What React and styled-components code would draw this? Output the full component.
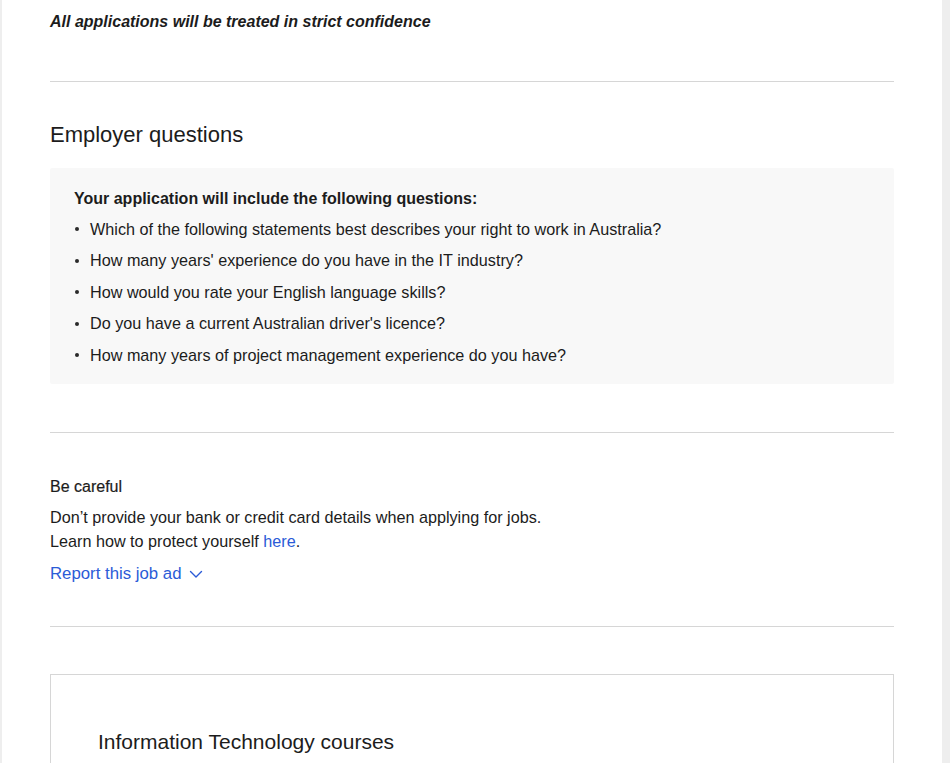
import React from 'react'
import styled, { createGlobalStyle } from 'styled-components'

const GlobalStyle = createGlobalStyle`
    body{
        margin: 0;
        background: #eeeeee;
        font-family: "Liberation Sans", Arial, Helvetica, sans-serif;
        color: #1c1c1c;
    }
`;

const questions = [
    'Which of the following statements best describes your right to work in Australia?',
    "How many years' experience do you have in the IT industry?",
    'How would you rate your English language skills?',
    "Do you have a current Australian driver's licence?",
    'How many years of project management experience do you have?',
]

function ChevronDown() {
    return (
        <svg width="14" height="14" viewBox="0 0 14 14" fill="none">
            <path d="M1.5 4.5 L7 10 L12.5 4.5" stroke="currentColor" strokeWidth="1.4" strokeLinecap="round" strokeLinejoin="round" />
        </svg>
    )
}

function App() {
    return (
        <>
            <GlobalStyle />
            <Panel>
                <Confidence>All applications will be treated in strict confidence</Confidence>
                <Divider $top={49} />

                <Section $pad={42}>
                    <SectionTitle>Employer questions</SectionTitle>
                    <QuestionBox>
                        <QuestionLead>Your application will include the following questions:</QuestionLead>
                        <QuestionList>
                            {questions.map((q) => (
                                <QuestionItem key={q}>{q}</QuestionItem>
                            ))}
                        </QuestionList>
                    </QuestionBox>
                </Section>
                <Divider $top={48} />

                <Section $pad={44}>
                    <CarefulTitle>Be careful</CarefulTitle>
                    <Body>
                        Don’t provide your bank or credit card details when applying for jobs.<br />
                        Learn how to protect yourself <Link href="#">here</Link>.
                    </Body>
                    <ReportButton type="button">
                        Report this job ad <ChevronDown />
                    </ReportButton>
                </Section>
                <Divider $top={40} />

                <CourseCard>
                    <CourseTitle>Information Technology courses</CourseTitle>
                </CourseCard>
            </Panel>
        </>
    )
}

const Panel = styled.div`
    margin-left: 2px;
    width: 940px;
    min-height: 763px;
    background: #fff;
    padding: 12px 48px 40px;
    box-sizing: border-box;
`;

const Confidence = styled.p`
    margin: 0;
    font-size: 16px;
    line-height: 20px;
    font-weight: 700;
    font-style: italic;
    color: #1c1c1c;
`;

const Divider = styled.hr`
    border: none;
    border-top: 1px solid #d6d6d6;
    margin: ${p => p.$top}px 0 0;
`;

const Section = styled.section`
    padding-top: ${p => p.$pad}px;
`;

const SectionTitle = styled.h2`
    margin: 0 0 22px;
    font-size: 22px;
    line-height: 22px;
    font-weight: 400;
    color: #1c1c1c;
`;

const QuestionBox = styled.div`
    background: #f8f8f8;
    border-radius: 2px;
    padding: 20px 24px 18px;
`;

const QuestionLead = styled.p`
    margin: 0;
    font-size: 16px;
    line-height: 22px;
    font-weight: 700;
`;

const QuestionList = styled.ul`
    list-style: none;
    margin: 0;
    padding: 0;
`;

const QuestionItem = styled.li`
    position: relative;
    padding-left: 16px;
    margin-top: 9.5px;
    font-size: 16.2px;
    line-height: 22px;
    &:first-child{
        margin-top: 7.5px;
    }
    &::before{
        content: '';
        position: absolute;
        left: 1px;
        top: 9.5px;
        width: 4px;
        height: 4px;
        border-radius: 50%;
        background: #2a2a2a;
    }
`;

const CarefulTitle = styled.h3`
    margin: 0 0 8px;
    font-size: 16px;
    line-height: 20px;
    font-weight: 500;
    -webkit-text-stroke: 0.2px #1c1c1c;
`;

const Body = styled.p`
    margin: 0;
    font-size: 16.2px;
    line-height: 24px;
`;

const Link = styled.a`
    color: #2b5bd7;
    text-decoration: none;
`;

const ReportButton = styled.button`
    display: inline-flex;
    align-items: center;
    gap: 7px;
    margin-top: 9px;
    padding: 0;
    border: none;
    background: none;
    font-family: inherit;
    font-size: 16.8px;
    line-height: 24px;
    color: #2b5bd7;
    cursor: pointer;
`;

const CourseCard = styled.div`
    margin-top: 47px;
    border: 1px solid #d6d6d6;
    padding: 54px 47px 40px;
    min-height: 120px;
`;

const CourseTitle = styled.h2`
    margin: 0;
    font-size: 21px;
    line-height: 26px;
    font-weight: 400;
    color: #1c1c1c;
`;

export default App
